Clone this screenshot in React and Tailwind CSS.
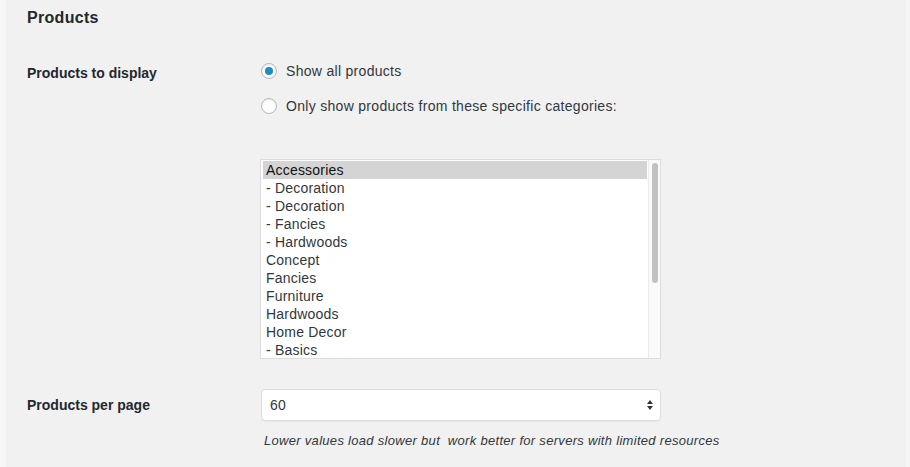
import React from "react";

const items = [
  "Accessories",
  "- Decoration",
  "- Decoration",
  "- Fancies",
  "- Hardwoods",
  "Concept",
  "Fancies",
  "Furniture",
  "Hardwoods",
  "Home Decor",
  "- Basics",
];

function Radio({ checked }) {
  return (
    <span className="w-4 h-4 rounded-full border border-[#b4b9be] bg-white shadow-[inset_0_1px_2px_rgba(0,0,0,0.1)] flex items-center justify-center shrink-0">
      {checked && <span className="w-2 h-2 rounded-full bg-[#1e8cbe]" />}
    </span>
  );
}

export default function App() {
  return (
    <div
      className="w-[910px] h-[467px] bg-[#f6f6f6] flex text-[#23282d] overflow-hidden"
      style={{ fontFamily: '"Liberation Sans", Arial, sans-serif' }}
    >
      <div className="ml-[6px] w-[900px] h-full bg-[#f1f1f1] pl-[21px]">
        <h2 className="text-[16px] font-bold pt-[8px] leading-[20px] tracking-[0.3px]">Products</h2>
        <div className="flex mt-[28px]">
          <div className="w-[234px] text-[14px] font-bold pt-[8px] leading-[18px]">Products to display</div>
          <div className="flex flex-col">
            <label className="flex items-center gap-[9px] h-[16px] mt-[7px] text-[14px] text-[#32373c] tracking-[0.3px]">
              <Radio checked />
              <span>Show all products</span>
            </label>
            <label className="flex items-center gap-[9px] h-[16px] mt-[19px] text-[14px] text-[#32373c] tracking-[0.3px]">
              <Radio />
              <span>Only show products from these specific categories:</span>
            </label>
            <div className="mt-[45px] -ml-[1px] w-[401px] h-[200px] bg-white border border-[#dddddd] flex pt-[1px] px-[2px]">
              <div className="flex-1 flex flex-col text-[14px] leading-[18px] text-[#32373c] overflow-hidden tracking-[0.2px]">
                {items.map((it, i) => (
                  <div
                    key={i}
                    className={
                      "pl-[3px] h-[18px] shrink-0 " + (i === 0 ? "bg-[#d4d4d4] text-[#111]" : "")
                    }
                  >
                    {it}
                  </div>
                ))}
              </div>
              <div className="w-[12px] ml-[1px] -mt-[1px] -mr-[2px] border-l border-[#ececec] bg-[#fafafa] flex justify-center pt-[3px]">
                <div className="w-[6px] h-[120px] rounded-full bg-[#c1c1c1]" />
              </div>
            </div>
          </div>
        </div>
        <div className="flex mt-[30px]">
          <div className="w-[234px] text-[14px] font-bold pt-[7px] leading-[18px]">Products per page</div>
          <div className="flex flex-col">
            <div className="w-[400px] h-[32px] bg-white border border-[#dddddd] rounded-[4px] shadow-[0_1px_1px_rgba(0,0,0,0.04)] flex items-center pl-[8px] pr-[6px] text-[14px] text-[#32373c]">
              <span className="flex-1 tracking-[0.3px]">60</span>
              <svg width="8" height="12" viewBox="0 0 8 12">
                <path d="M4 1 L7 5 L1 5 Z" fill="#333" />
                <path d="M4 11 L7 7 L1 7 Z" fill="#333" />
              </svg>
            </div>
            <p className="mt-[11px] ml-[3px] text-[13px] italic text-[#32373c] leading-[18px] tracking-[0.3px]">
              Lower values load slower but&nbsp; work better for servers with limited resources
            </p>
          </div>
        </div>
      </div>
    </div>
  );
}
